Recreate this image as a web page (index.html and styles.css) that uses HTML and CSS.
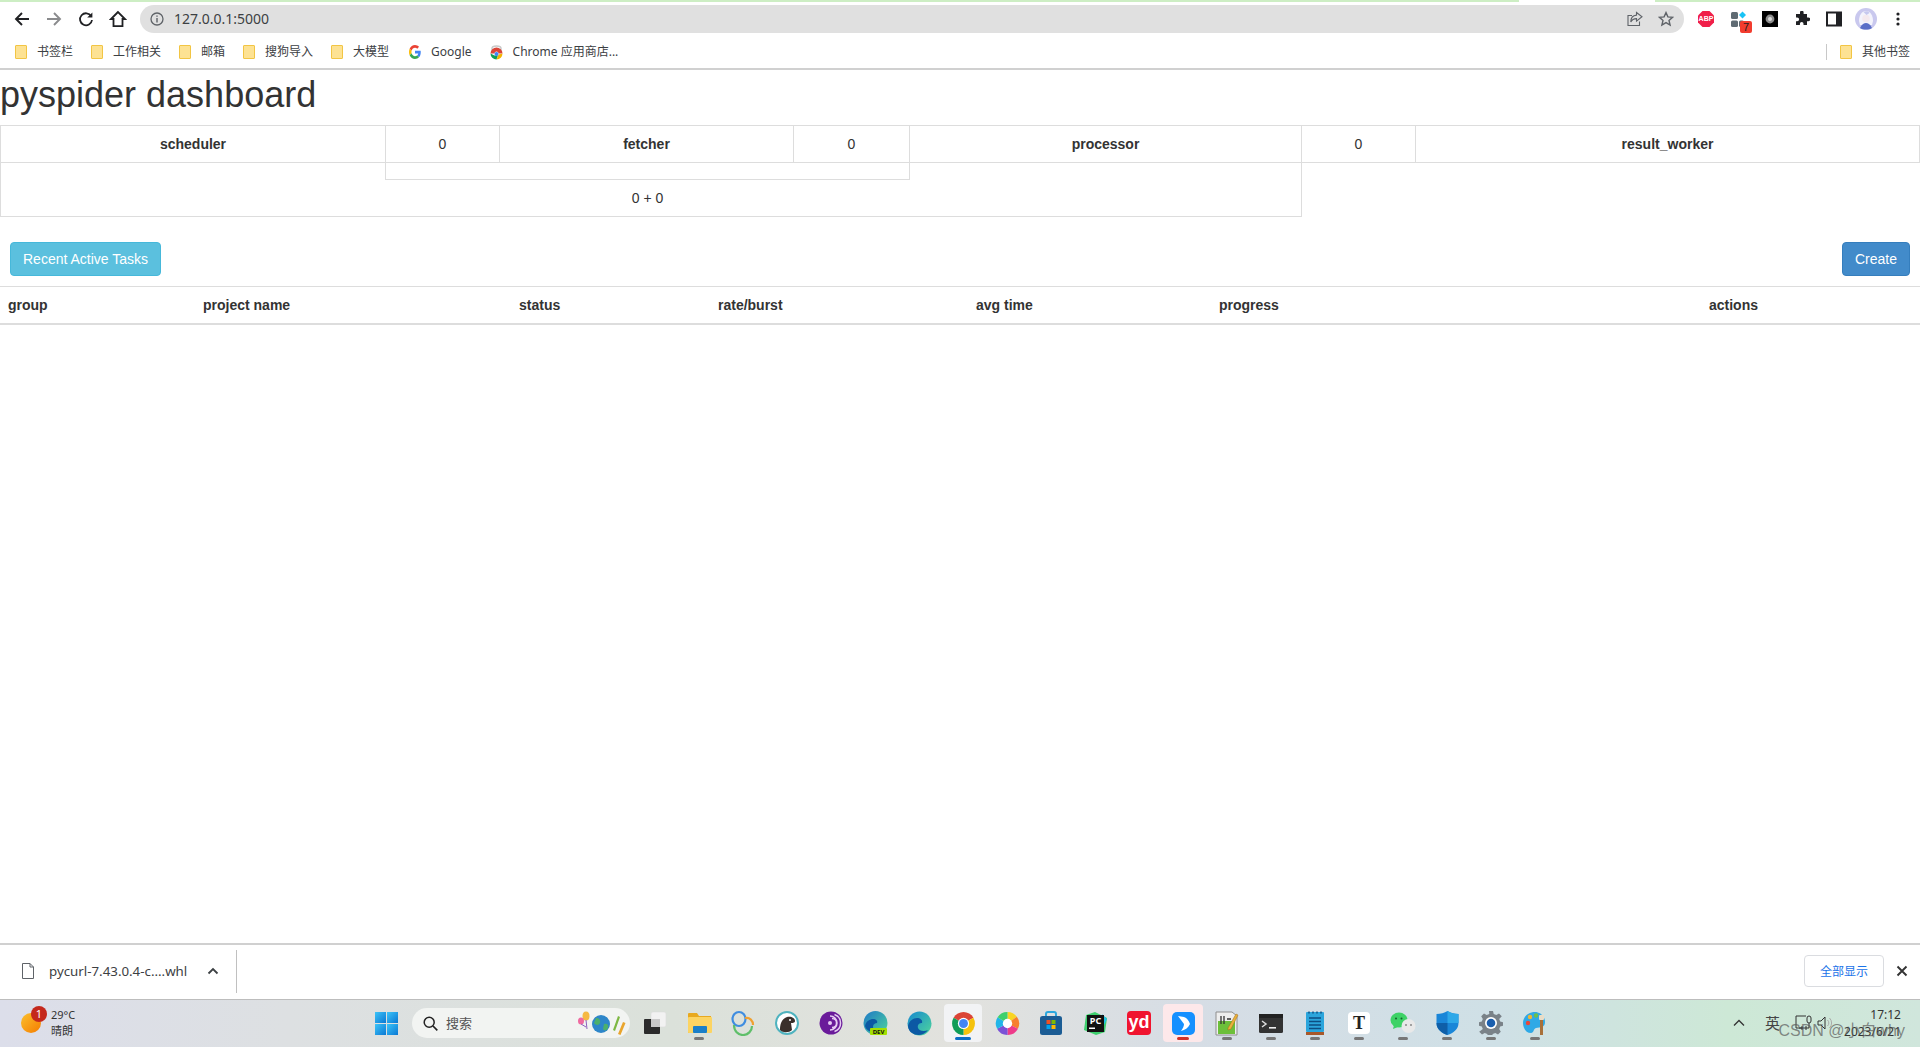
FILE: index.html
```html
<!DOCTYPE html>
<html lang="en">
<head>
    <meta charset="UTF-8">
    <title>pyspider dashboard</title>
    <link rel="stylesheet" href="styles.css">
</head>
<body>
    <div class="progress"></div>

    <div class="toolbar">
        <span class="nav-btn"><svg width="16" height="16" viewBox="0 0 16 16"><path d="M15 8H2.5M8 2L2 8l6 6" fill="none" stroke="#202124" stroke-width="1.9"/></svg></span>
        <span class="nav-btn"><svg width="16" height="16" viewBox="0 0 16 16"><path d="M1 8h12.5M8 2l6 6-6 6" fill="none" stroke="#8a8b8d" stroke-width="1.9"/></svg></span>
        <span class="nav-btn"><svg width="16" height="16" viewBox="0 0 16 16"><path d="M13.2 5.2A6 6 0 1 0 14 9" fill="none" stroke="#202124" stroke-width="1.8"/><path d="M14.4 1.4v5.2H9.2z" fill="#202124"/></svg></span>
        <span class="nav-btn"><svg width="18" height="18" viewBox="0 0 18 18"><path d="M9 2L2 9h2.5v7.2h9V9H16z" fill="none" stroke="#202124" stroke-width="1.8"/></svg></span>

        <div class="address">
            <svg class="info-icon" width="14" height="14" viewBox="0 0 14 14"><circle cx="7" cy="7" r="6" fill="none" stroke="#5f6368" stroke-width="1.3"/><path d="M7 6v4.4M7 3.4v1.4" stroke="#5f6368" stroke-width="1.4"/></svg>
            <span class="url">127.0.0.1:5000</span>
            <svg class="share-icon" width="16" height="16" viewBox="0 0 16 16"><path d="M9.5 1.5L15 5.8l-5.5 4.3V7.6C6.5 7.6 4.8 9 3.8 11c0-4 2-6.600 5.700-6.900z" fill="none" stroke="#5f6368" stroke-width="1.100"/><path d="M12.500 10.500v4H1V4.500h4" fill="none" stroke="#5f6368" stroke-width="1.100"/></svg>
            <svg class="star-icon" width="16" height="16" viewBox="0 0 16 16"><path d="M8 1.600l1.900 4.300 4.700.4-3.600 3.100 1.100 4.600L8 11.600l-4.100 2.400L5 9.400 1.400 6.300l4.700-.4z" fill="none" stroke="#5f6368" stroke-width="1.400"/></svg>
        </div>

        <div class="extensions">
            <span class="nav-btn"><svg width="18" height="18" viewBox="0 0 18 18"><path d="M5.500 1h7L17 5.500v7L12.500 17h-7L1 12.500v-7z" fill="#f01f49"/><text x="9" y="11.400" class="abp-text">ABP</text></svg></span>
            <span class="nav-btn"><svg width="24" height="24" viewBox="0 0 24 24"><rect x="5" y="5" width="7" height="7" rx="1.500" fill="#5f6b73"/><rect x="5" y="13.500" width="7" height="6.500" rx="1.500" fill="#5f6b73"/><rect x="13" y="13.500" width="5" height="6.500" rx="1.500" fill="#5f6b73"/><path d="M16.500 4.500l3.500 3.500-3.500 3.500L13 8z" fill="#19c3f5"/></svg><span class="ext-badge">7</span></span>
            <span class="nav-btn"><svg width="16" height="16" viewBox="0 0 16 16"><rect width="16" height="16" fill="#000"/><circle cx="8" cy="8" r="4.400" fill="#8d8d8d"/><circle cx="8" cy="8" r="2" fill="#d8d8d8"/></svg></span>
            <span class="nav-btn"><svg width="16" height="16" viewBox="0 0 16 16"><path d="M6 1.500a1.800 1.800 0 0 1 3.600 0V3H13v3.400h1.300a1.900 1.900 0 0 1 0 3.800H13V14H9.500v-1.200a1.800 1.800 0 0 0-3.600 0V14H2v-3.800h1.200a1.900 1.900 0 0 0 0-3.800H2V3h4z" fill="#202124"/></svg></span>
            <span class="nav-btn"><svg width="16" height="16" viewBox="0 0 16 16"><rect x="1" y="1.500" width="14" height="13" fill="none" stroke="#202124" stroke-width="2"/><rect x="10" y="1.500" width="5" height="13" fill="#202124"/></svg></span>
            <span class="nav-btn"><svg width="22" height="22" viewBox="0 0 22 22"><circle cx="11" cy="11" r="11" fill="#c9c8ee"/><path d="M4 13c0-6 3-10 7-10s7 4 7 10l-1 4H5z" fill="#f3f3fc"/><circle cx="11" cy="10.500" r="3.800" fill="#f4e9ee"/><path d="M8.500 4c2-1 5-1 6 1l-3 2z" fill="#c6c8ee"/><path d="M5 20c2-4 4-5 6-5s4 1 6 5c-3 2-9 2-12 0z" fill="#5b6fc7"/></svg></span>
            <span class="nav-btn"><svg width="4" height="14" viewBox="0 0 4 14"><circle cx="2" cy="2" r="1.600" fill="#202124"/><circle cx="2" cy="7" r="1.600" fill="#202124"/><circle cx="2" cy="12" r="1.600" fill="#202124"/></svg></span>
        </div>
    </div>

    <div class="bookmarks">
        <span class="bookmark"><span class="folder"></span>书签栏</span>
        <span class="bookmark"><span class="folder"></span>工作相关</span>
        <span class="bookmark"><span class="folder"></span>邮箱</span>
        <span class="bookmark"><span class="folder"></span>搜狗导入</span>
        <span class="bookmark"><span class="folder"></span>大模型</span>
        <span class="bookmark">
            <svg width="12" height="14" viewBox="0 0 48 48" preserveAspectRatio="none"><path fill="#EA4335" d="M24 9.500c3.540 0 6.710 1.220 9.210 3.600l6.850-6.850C35.900 2.380 30.470 0 24 0 14.620 0 6.510 5.380 2.560 13.220l7.980 6.190C12.430 13.720 17.740 9.500 24 9.500z"/><path fill="#4285F4" d="M46.980 24.550c0-1.570-.15-3.090-.38-4.550H24v9.020h12.940c-.58 2.960-2.260 5.480-4.780 7.180l7.730 6c4.510-4.180 7.090-10.360 7.090-17.650z"/><path fill="#FBBC05" d="M10.530 28.590c-.48-1.450-.76-2.990-.76-4.590s.27-3.140.76-4.590l-7.980-6.190C.92 16.460 0 20.120 0 24c0 3.880.92 7.540 2.560 10.780l7.970-6.190z"/><path fill="#34A853" d="M24 48c6.480 0 11.930-2.130 15.890-5.810l-7.730-6c-2.150 1.450-4.920 2.300-8.160 2.300-6.260 0-11.570-4.220-13.470-9.910l-7.980 6.190C6.510 42.620 14.620 48 24 48z"/></svg>
            Google
        </span>
        <span class="bookmark">
            <svg width="13" height="15" viewBox="0 0 13 15"><path d="M2 7V3.500C2 2 4 1 6.500 1S11 2 11 3.500V7" fill="none" stroke="#c9c9c9" stroke-width="1.500"/><path d="M.5 8.500a6 6 0 0 1 12 0H8.500a2 2 0 0 0-4 0z" fill="#db4437"/><path d="M.5 8.500a6 6 0 0 0 6 6l1.500-4H4.500z" fill="#0f9d58"/><path d="M12.500 8.500a6 6 0 0 1-6 6L8.500 9.500z" fill="#f4b400"/><circle cx="6.500" cy="9" r="2" fill="#4285f4"/></svg>
            Chrome 应用商店...
        </span>
        <span class="other-bookmarks"><span class="folder"></span>其他书签</span>
    </div>

    <main class="page">
        <h1>pyspider dashboard</h1>

        <table class="stats">
            <colgroup>
                <col class="c-scheduler"><col class="c-num"><col class="c-fetcher"><col class="c-num-wide"><col class="c-processor"><col class="c-num"><col>
            </colgroup>
            <tr class="names">
                <th>scheduler</th>
                <td>0</td>
                <th>fetcher</th>
                <td>0</td>
                <th>processor</th>
                <td>0</td>
                <th>result_worker</th>
            </tr>
            <tr class="spacer">
                <td rowspan="2" class="side left"></td>
                <td colspan="3" class="mid"></td>
                <td rowspan="2" class="side right"></td>
            </tr>
            <tr class="sums">
                <td colspan="3">0 + 0</td>
            </tr>
        </table>

        <div class="actions-row">
            <a class="btn btn-info">Recent Active Tasks</a>
            <a class="btn btn-primary">Create</a>
        </div>

        <table class="projects">
            <colgroup>
                <col class="p-group"><col class="p-name"><col class="p-status"><col class="p-rate"><col class="p-time"><col class="p-progress"><col>
            </colgroup>
            <thead>
                <tr>
                    <th>group</th>
                    <th>project name</th>
                    <th>status</th>
                    <th>rate/burst</th>
                    <th>avg time</th>
                    <th>progress</th>
                    <th>actions</th>
                </tr>
            </thead>
        </table>
    </main>

    <div class="download-bar">
        <div class="download-item">
            <svg width="12" height="16" viewBox="0 0 12 16"><path d="M.5.500h7.500l3.500 3.500v11.500H.5z" fill="#fff" stroke="#5f6368"/><path d="M8 .5V4h3.500" fill="none" stroke="#5f6368"/></svg>
            <span class="download-name">pycurl-7.43.0.4-c....whl</span>
            <svg width="12" height="8" viewBox="0 0 12 8"><path d="M1.500 6.500L6 2l4.500 4.500" fill="none" stroke="#3c4043" stroke-width="1.800"/></svg>
        </div>
        <button class="show-all">全部显示</button>
        <svg class="close-bar" width="12" height="12" viewBox="0 0 12 12"><path d="M1.500 1.500l9 9M10.500 1.500l-9 9" stroke="#333" stroke-width="1.900"/></svg>
    </div>

    <div class="taskbar">
        <div class="weather">
            <span class="sun"><span class="sun-badge">1</span></span>
            <div class="weather-text"><div>29°C</div><div>晴朗</div></div>
        </div>

        <svg class="start" width="23" height="23" viewBox="0 0 23 23">
            <defs><linearGradient id="win" x1="0" y1="0" x2="1" y2="1"><stop offset="0" stop-color="#3cc4f8"/><stop offset="1" stop-color="#0a78d4"/></linearGradient></defs>
            <rect width="11" height="11" fill="url(#win)"/><rect x="12" width="11" height="11" fill="url(#win)"/><rect y="12" width="11" height="11" fill="url(#win)"/><rect x="12" y="12" width="11" height="11" fill="url(#win)"/>
        </svg>

        <div class="search">
            <svg width="15" height="15" viewBox="0 0 15 15"><circle cx="6.200" cy="6.200" r="5" fill="none" stroke="#222" stroke-width="1.500"/><path d="M10 10l4.300 4.300" stroke="#222" stroke-width="1.700"/></svg>
            <span class="search-text">搜索</span>
            <svg class="search-art" width="50" height="26" viewBox="0 0 50 26">
                <ellipse cx="9" cy="6" rx="3.500" ry="4.500" fill="#f5b942"/><ellipse cx="4" cy="11" rx="3" ry="3.500" fill="#f06aa0"/><path d="M9 10l1 9M4 14l5 3" stroke="#8f5fbf"/>
                <circle cx="24" cy="14" r="9" fill="#2e86c9"/><path d="M19 8c3 0 5 2 4 5s-5 2-6 0zM27 14c3-1 5 1 4 4s-4 3-5 1z" fill="#4caf6b"/>
                <path d="M36 20l5-14 2 1-5 14z" fill="#7db843"/><path d="M41 24l5-12 2.500 1-5 12z" fill="#e9a52d"/>
            </svg>
        </div>

        <div class="tasks">
            <span class="task"><svg width="24" height="24" viewBox="0 0 24 24"><rect x="8" y="1" width="15" height="15" rx="2" fill="#f2f2f2" stroke="#dcdcdc" stroke-width=".6"/><rect x="1" y="8" width="16" height="15" rx="1" fill="#2b2b2b"/><rect x="8" y="8" width="9" height="8" fill="#c9c9c9"/></svg></span>
            <span class="task running"><svg width="25" height="24" viewBox="0 0 25 24"><path d="M1 3a1 1 0 0 1 1-1h8l2 3h12v16a1 1 0 0 1-1 1H2a1 1 0 0 1-1-1z" fill="#e8a91f"/><rect x="1" y="6" width="24" height="16" rx="1" fill="#fcd462"/><rect x="6" y="15" width="14" height="7" rx="1" fill="#1a7fc8"/></svg></span>
            <span class="task"><svg width="24" height="26" viewBox="0 0 24 26"><ellipse cx="8" cy="9" rx="6.500" ry="7" fill="none" stroke="#3f8de0" stroke-width="2.200"/><path d="M14 8c5-1 8 3 8 7" fill="none" stroke="#f0a030" stroke-width="2.200"/><path d="M3 15c0 6 4 10 9 10s9-4 9-9" fill="none" stroke="#5fbf6a" stroke-width="2.200"/></svg></span>
            <span class="task"><svg width="24" height="24" viewBox="0 0 24 24"><circle cx="12" cy="12" r="11" fill="#fff" stroke="#4fb3bf" stroke-width="2"/><path d="M5 19c0-5 1-11 7-13 4-1 8 1 8 4 0 2-3 2-4 2l1 7c-3 3-9 3-12 0z" fill="#3a2f2b"/><circle cx="15" cy="9" r="1" fill="#fff"/></svg></span>
            <span class="task"><svg width="24" height="24" viewBox="0 0 24 24"><circle cx="12" cy="12" r="11.500" fill="#6a1b9a"/><path d="M11 5a7 7 0 0 1 0 14M13 7.500a4.500 4.500 0 0 1 0 9M15.500 3.500a9 9 0 0 1 0 17" fill="none" stroke="#e6cdf2" stroke-width="1.500"/><circle cx="11" cy="12" r="2" fill="#e6cdf2"/></svg></span>
            <span class="task"><svg width="25" height="25" viewBox="0 0 25 25"><defs><linearGradient id="edge-dev" x1="0" y1="0" x2="1" y2="1"><stop offset="0" stop-color="#1d78c8"/><stop offset="1" stop-color="#4fd69b"/></linearGradient></defs><circle cx="12.500" cy="12" r="12" fill="url(#edge-dev)"/><path d="M2 15c1-5 5-7 8-7 3 0 5 2 4 4-2 0-4 1-4 4 0 2 1 4 3 5-5 1-10-2-11-6z" fill="#0c59a4"/><rect x="7" y="17" width="17" height="7" rx="1" fill="#a4e000"/><text x="15.500" y="22.800" class="dev-text">DEV</text></svg></span>
            <span class="task"><svg width="25" height="25" viewBox="0 0 25 25"><defs><linearGradient id="edge" x1="0" y1="0" x2="1" y2="1"><stop offset="0" stop-color="#1689d0"/><stop offset="1" stop-color="#4fd69b"/></linearGradient></defs><circle cx="12.500" cy="12.500" r="12" fill="url(#edge)"/><path d="M1 15c1-5 5-8 9-8 3 0 6 2 5 5-2 0-5 1-4 5 1 3 6 4 10 2-4 6-12 6-16 3-2-1-4-4-4-7z" fill="#0c59a4"/></svg></span>
            <span class="task active"><svg width="25" height="25" viewBox="0 0 24 24"><path d="M12 12L21.500 6.500A11 11 0 0 0 2.500 6.500z" fill="#db4437"/><path d="M12 12L21.500 6.500A11 11 0 0 1 12 23z" fill="#f4c20d"/><path d="M12 12L12 23A11 11 0 0 1 2.500 6.500z" fill="#0f9d58"/><circle cx="12" cy="12" r="5.400" fill="#fff"/><circle cx="12" cy="12" r="4.300" fill="#4285f4"/></svg></span>
            <span class="task"><svg width="25" height="25" viewBox="0 0 24 24"><path d="M12 1a11 11 0 0 1 9 4.500L12 12z" fill="#f9d423"/><path d="M21 5.500A11 11 0 0 1 22 17l-10-5z" fill="#f77f2f"/><path d="M22 17a11 11 0 0 1-10 6V12z" fill="#ee3b8a"/><path d="M12 23A11 11 0 0 1 2 17l10-5z" fill="#7b52d6"/><path d="M2 17A11 11 0 0 1 2.500 6l9.500 6z" fill="#22b5e8"/><path d="M2.500 6A11 11 0 0 1 12 1v11z" fill="#3ed06c"/><circle cx="12" cy="12" r="4.500" fill="#fff"/></svg></span>
            <span class="task"><svg width="24" height="26" viewBox="0 0 24 26"><path d="M7 7V4a2 2 0 0 1 2-2h6a2 2 0 0 1 2 2v3" fill="none" stroke="#2ba7de" stroke-width="2"/><rect x="1" y="6" width="22" height="19" rx="2.500" fill="#1b5c94"/><rect x="7.500" y="10" width="4" height="4" fill="#f25022"/><rect x="12.500" y="10" width="4" height="4" fill="#7fba00"/><rect x="7.500" y="15" width="4" height="4" fill="#00a4ef"/><rect x="12.500" y="15" width="4" height="4" fill="#ffb900"/></svg></span>
            <span class="task"><svg width="25" height="25" viewBox="0 0 25 25"><path d="M3 4l9-3 12 6-2 14-9 3-12-5z" fill="#3ecf6e"/><path d="M19 3l5 5-3 6z" fill="#22c4e8"/><rect x="4" y="4" width="17" height="17" fill="#111"/><text x="12.500" y="13" class="pc-text">PC</text><rect x="6" y="16.500" width="6" height="1.500" fill="#fff"/></svg></span>
            <span class="task"><span class="yd-icon">yd</span></span>
            <span class="task pinned"><svg width="23" height="23" viewBox="0 0 23 23"><rect width="23" height="23" rx="5" fill="#1690ff"/><path d="M6 4l6 1c3 1 5 4 6 7-2 4-5 6-9 7 2-3 3-5 3-7z" fill="#fff"/></svg></span>
            <span class="task running"><svg width="24" height="25" viewBox="0 0 24 25"><path d="M1 1h16l5 4v19H1z" fill="#eee" stroke="#8e8e8e"/><rect x="3" y="10" width="17" height="13" fill="#6cbf3a"/><path d="M6 5v8M9 5v8M12 8h4" stroke="#333" stroke-width="1.300"/><path d="M13 17L21 3l2 1-7 14-3 1z" fill="#e8b23a" stroke="#a86a1a" stroke-width=".5"/></svg></span>
            <span class="task running"><svg width="24" height="19" viewBox="0 0 24 19"><rect width="24" height="19" rx="1.500" fill="#333"/><rect width="24" height="4" fill="#222"/><path d="M3 7l4 3-4 3" fill="none" stroke="#ddd" stroke-width="1.500"/><rect x="10" y="13" width="7" height="1.600" fill="#eee"/></svg></span>
            <span class="task running"><svg width="18" height="24" viewBox="0 0 18 24"><rect y="1" width="18" height="20" rx="1" fill="#2ba5dc"/><rect y="21" width="18" height="3" fill="#a8582a"/><path d="M3 7h12M3 10.500h12M3 14h12M3 17.500h12" stroke="#0d4e82" stroke-width="1.600"/><path d="M3 .5v2M7 .5v2M11 .5v2M15 .5v2" stroke="#0d4e82" stroke-width="1.400"/></svg></span>
            <span class="task running"><span class="typora-icon">T</span></span>
            <span class="task running"><svg width="26" height="22" viewBox="0 0 26 22"><ellipse cx="9" cy="8" rx="8.500" ry="7.500" fill="#3ed266"/><path d="M4 13l-1 4 5-2z" fill="#3ed266"/><circle cx="6" cy="6.500" r="1" fill="#155f2c"/><circle cx="11.500" cy="6.500" r="1" fill="#155f2c"/><circle cx="18.500" cy="14" r="7" fill="#e9e9e9"/><circle cx="16" cy="13" r="1" fill="#888"/><circle cx="21" cy="13" r="1" fill="#888"/></svg></span>
            <span class="task running"><svg width="23" height="24" viewBox="0 0 23 24"><path d="M11.500 0c3 2 7 3 11 3v9c0 6-5 10-11 12C5.500 22 .5 18 .5 12V3c4 0 8-1 11-3z" fill="#1a86d8"/><path d="M11.500 0c3 2 7 3 11 3v9H11.500z" fill="#2ea8e8"/><path d="M.5 12h11v12C5.500 22 .5 18 .5 12z" fill="#0f5fa8"/></svg></span>
            <span class="task running"><svg width="24" height="24" viewBox="0 0 24 24"><path d="M10 0h4l.7 3 2.600 1 2.700-1.600 2.800 2.800L20.200 8l1 2.600 2.800.7v3.400l-2.800.7-1 2.600 1.600 2.700-2.800 2.800-2.700-1.600-2.600 1-.7 3h-4l-.7-3-2.600-1-2.700 1.600-2.800-2.800L3.800 18l-1-2.600-2.800-.7v-3.400l2.800-.7 1-2.600L2.200 5.200 5 2.400l2.700 1.600 2.600-1z" fill="#7a8288"/><circle cx="12" cy="12" r="6" fill="#fff"/><circle cx="12" cy="12" r="4.300" fill="#1b5fae"/></svg></span>
            <span class="task running"><svg width="24" height="24" viewBox="0 0 24 24"><path d="M12 1C5 1 0 6 0 12c0 5 3 10 8 10 3 0 2-4 5-5 4-1 9 0 9-6 0-6-5-10-10-10z" fill="#2fa9e6"/><circle cx="5" cy="12" r="2.200" fill="#e8483a"/><circle cx="7" cy="6" r="2.200" fill="#f2b632"/><circle cx="13" cy="4.500" r="2.200" fill="#6cc04a"/><rect x="17" y="8" width="3" height="16" fill="#a8703a"/><rect x="16" y="4" width="5" height="5" rx="1" fill="#e9dcc6"/></svg></span>
        </div>

        <div class="tray">
            <svg width="12" height="8" viewBox="0 0 12 8"><path d="M1 6.500L6 1.500l5 5" fill="none" stroke="#333" stroke-width="1.300"/></svg>
            <span class="ime">英</span>
            <svg class="net" width="18" height="16" viewBox="0 0 18 16"><path d="M8 13H1V1h10" fill="none" stroke="#333"/><rect x="12" y="1" width="4" height="7" rx="2" fill="none" stroke="#333"/><path d="M4 13h10M14 8v5M7 11v4M11 11v4" stroke="#333"/></svg>
            <svg class="speaker" width="16" height="14" viewBox="0 0 16 14"><path d="M1 5h3l4-4v12l-4-4H1z" fill="none" stroke="#333"/><path d="M10.500 4a4 4 0 0 1 0 6M12.500 2a7 7 0 0 1 0 10" fill="none" stroke="#aaa"/></svg>
            <div class="clock"><div>17:12</div><div>2023/6/21</div></div>
        </div>

        <span class="watermark">CSDN @小白why</span>
    </div>
</body>
</html>
```

FILE: styles.css
```css
* {
    box-sizing: border-box;
}

html, body {
    height: 100%;
}

body {
    margin: 0;
    display: flex;
    flex-direction: column;
    overflow: hidden;
    background: #fff;
    color: #333;
    font-family: "Liberation Sans", Arial, sans-serif;
    font-size: 14px;
    line-height: 20px;
}

/* browser chrome */
.progress {
    height: 2px;
    flex: none;
    background: linear-gradient(to right, #cdeec4 0, #cdeec4 1519px, #fff 1519px, #fff 1655px, #cdeec4 1655px);
}

.toolbar {
    height: 34px;
    flex: none;
    display: flex;
    align-items: center;
    padding: 0 6px;
}

.nav-btn {
    position: relative;
    width: 32px;
    height: 28px;
    flex: none;
    display: flex;
    align-items: center;
    justify-content: center;
}

.address {
    flex: 1;
    height: 28px;
    margin: 0 6px;
    padding: 0 10px;
    display: flex;
    align-items: center;
    background: #e0e0e0;
    border-radius: 14px;
}

.url {
    margin-left: 10px;
    font-family: "Noto Sans", sans-serif;
    font-size: 14px;
    color: #3c4043;
}

.share-icon {
    margin-left: auto;
}

.star-icon {
    margin-left: 15px;
}

.extensions {
    display: flex;
    flex: none;
}

.abp-text {
    font-size: 7px;
    font-weight: bold;
    fill: #fff;
    text-anchor: middle;
}

.ext-badge {
    position: absolute;
    right: 2px;
    bottom: 0;
    width: 12px;
    height: 12px;
    background: #f23c2e;
    border-radius: 2px;
    color: #222;
    font-size: 11px;
    line-height: 12px;
    text-align: center;
}

.bookmarks {
    height: 34px;
    flex: none;
    display: flex;
    align-items: center;
    padding-left: 15px;
    border-bottom: 2px solid #d0d0d0;
    font-family: "Noto Sans", "Noto Sans CJK SC", sans-serif;
    font-size: 12px;
    color: #3c4043;
}

.bookmark {
    display: flex;
    align-items: center;
    gap: 10px;
    margin-right: 18px;
}

.bookmark:nth-child(6) {
    margin-left: 2px;
}

.folder {
    width: 12px;
    height: 14px;
    flex: none;
    background: #fde293;
    border: 1px solid #f2c544;
    border-radius: 1px;
}

.other-bookmarks {
    margin-left: auto;
    padding: 0 10px 0 13px;
    display: flex;
    align-items: center;
    gap: 10px;
    height: 16px;
    border-left: 1px solid #c8c8c8;
}

/* dashboard */
.page {
    flex: 1;
    min-height: 0;
    overflow: hidden;
}

h1 {
    margin: 5px 0 10px;
    font-size: 36px;
    font-weight: 500;
    line-height: 1.1;
}

table {
    width: 100%;
    border-collapse: collapse;
    table-layout: fixed;
}

.stats th,
.stats td {
    padding: 8px;
    border: 1px solid #ddd;
    text-align: center;
}

.c-scheduler { width: 385px; }
.c-num { width: 114px; }
.c-num-wide { width: 116px; }
.c-fetcher { width: 294px; }
.c-processor { width: 392px; }

.stats .spacer td.mid {
    height: 17px;
    padding: 0;
}

.stats .side.left {
    border-right: 0;
}

.stats .side.right {
    border-left: 0;
}

.stats .sums td {
    border-left: 0;
    border-right: 0;
}

.actions-row {
    display: flex;
    justify-content: space-between;
    margin: 25px 10px 10px;
}

.btn {
    padding: 6px 12px;
    border: 1px solid transparent;
    border-radius: 4px;
    color: #fff;
}

.btn-info {
    background: #5bc0de;
    border-color: #46b8da;
}

.btn-primary {
    background: #428bca;
    border-color: #357ebd;
}

.projects th {
    padding: 8px;
    border-top: 1px solid #ddd;
    border-bottom: 2px solid #ddd;
    text-align: left;
}

.p-group { width: 195px; }
.p-name { width: 316px; }
.p-status { width: 199px; }
.p-rate { width: 258px; }
.p-time { width: 243px; }
.p-progress { width: 490px; }

/* download shelf */
.download-bar {
    height: 56px;
    flex: none;
    display: flex;
    align-items: center;
    padding-bottom: 2px;
    border-top: 2px solid #d0d0d0;
    font-family: "Noto Sans", "Noto Sans CJK SC", sans-serif;
    font-size: 13px;
}

.download-item {
    width: 237px;
    height: 43px;
    padding-left: 22px;
    display: flex;
    align-items: center;
    border-right: 1px solid #c0c0c0;
}

.download-name {
    width: 158px;
    margin-left: 15px;
    white-space: nowrap;
    color: #3c4043;
    font-size: 13.3px;
}

.show-all {
    width: 80px;
    height: 32px;
    margin-left: auto;
    padding: 0;
    background: #fff;
    border: 1px solid #dadce0;
    border-radius: 4px;
    color: #1a73e8;
    font-family: inherit;
    font-size: 12px;
}

.close-bar {
    margin: 0 12px;
}

/* windows taskbar */
.taskbar {
    position: relative;
    height: 48px;
    flex: none;
    display: flex;
    align-items: center;
    padding-bottom: 1px;
    border-top: 1px solid #bdbdbd;
    background: linear-gradient(90deg, #dcdeea 0, #dde0e2 15%, #dbe1da 35%, #e2e2de 50%, #d6dde5 62%, #cfe0e6 78%, #cde8d6 90%, #d0e6dc 100%);
    font-family: "Noto Sans", "Noto Sans CJK SC", sans-serif;
}

.weather {
    width: 375px;
    flex: none;
    padding-left: 21px;
    display: flex;
    align-items: center;
    gap: 10px;
}

.sun {
    position: relative;
    width: 20px;
    height: 20px;
    border-radius: 50%;
    background: linear-gradient(135deg, #fbc02d, #f57c00);
}

.sun-badge {
    position: absolute;
    top: -7px;
    left: 10px;
    width: 16px;
    height: 16px;
    border-radius: 50%;
    background: #c4281c;
    color: #fff;
    font-size: 11px;
    line-height: 16px;
    text-align: center;
}

.weather-text {
    font-size: 11px;
    line-height: 16px;
    color: #333;
}

.start {
    flex: none;
}

.search {
    width: 218px;
    height: 30px;
    margin: 0 3px 0 14px;
    padding: 0 3px 0 11px;
    flex: none;
    display: flex;
    align-items: center;
    background: #f2f4f2;
    border-radius: 15px;
}

.search-text {
    margin-left: 8px;
    font-size: 13px;
    color: #555;
}

.search-art {
    margin-left: auto;
}

.tasks {
    display: flex;
    flex: none;
}

.task {
    position: relative;
    width: 44px;
    height: 38px;
    display: flex;
    align-items: center;
    justify-content: center;
    border-radius: 4px;
}

.task.running::after,
.task.active::after,
.task.pinned::after {
    content: "";
    position: absolute;
    bottom: 2px;
    left: 17px;
    width: 10px;
    height: 3px;
    border-radius: 2px;
    background: #777;
}

.task.active {
    margin: 0 3px;
    width: 38px;
    background: #f2f3f5;
}

.task.active::after {
    left: 11px;
    width: 16px;
    background: #0a6cc4;
}

.task.pinned {
    margin: 0 2px;
    width: 40px;
    background: #fde8ea;
}

.task.pinned::after {
    left: 14px;
    width: 12px;
    background: #d0302a;
}

.yd-icon {
    width: 24px;
    height: 24px;
    border-radius: 4px;
    background: #f0142f;
    color: #fff;
    font-family: "Liberation Sans", sans-serif;
    font-weight: bold;
    font-size: 18px;
    line-height: 22px;
    text-align: center;
}

.typora-icon {
    width: 22px;
    height: 22px;
    border-radius: 4px;
    background: #fff;
    color: #222;
    font-family: "Liberation Serif", serif;
    font-weight: bold;
    font-size: 18px;
    line-height: 22px;
    text-align: center;
}

.dev-text,
.pc-text {
    font-weight: bold;
    text-anchor: middle;
}

.dev-text {
    font-size: 6px;
    fill: #111;
}

.pc-text {
    font-size: 9px;
    fill: #fff;
}

.tray {
    margin-left: auto;
    padding-right: 19px;
    display: flex;
    align-items: center;
    color: #333;
}

.ime {
    margin: 0 15px 0 20px;
    font-size: 15px;
    color: #444;
}

.net {
    margin-right: 4px;
}

.speaker {
    margin-right: 10px;
}

.clock {
    width: 58px;
    font-size: 12px;
    line-height: 17px;
    text-align: right;
}

.watermark {
    position: absolute;
    right: 15px;
    top: 21px;
    font-family: "Liberation Sans", "Noto Sans CJK SC", sans-serif;
    font-size: 16px;
    color: rgba(90, 90, 90, 0.7);
    white-space: nowrap;
}
```
